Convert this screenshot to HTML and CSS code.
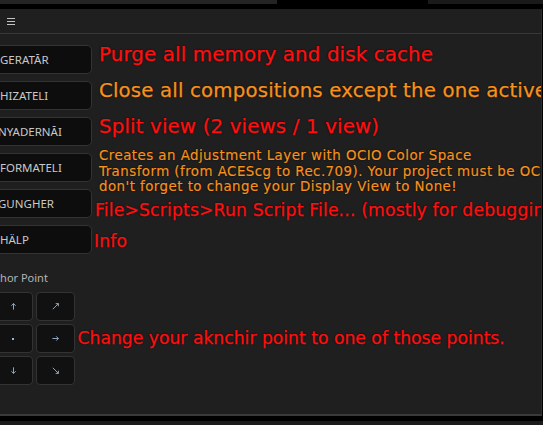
FILE: index.html
```html
<!DOCTYPE html>
<html>
<head>
<meta charset="utf-8">
<link rel="stylesheet" href="styles.css">
</head>
<body>
<div class="topbar"><div class="seg seg-a"></div><div class="seg seg-b"></div><div class="seg seg-c"></div></div>
<div class="panel">
  <div class="panel-head"><span class="burger"><i></i><i></i><i></i></span></div>
  <div class="panel-body">
    <div class="rows">
      <div class="btn">GERATĂR</div>
      <div class="desc d-lg red">Purge all memory and disk cache</div>
      <div class="btn">HIZATELI</div>
      <div class="desc d-lg orange">Close all compositions except the one active</div>
      <div class="btn btn-shift">NYADERNĂI</div>
      <div class="desc d-lg red">Split view (2 views / 1 view)</div>
      <div class="btn">FORMATELI</div>
      <div class="desc d-sm orange">Creates an Adjustment Layer with OCIO Color Space<br>Transform (from ACEScg to Rec.709). Your project must be OCIO, and<br>don't forget to change your Display View to None!</div>
      <div class="btn btn-shift">GUNGHER</div>
      <div class="desc d-md red">File&gt;Scripts&gt;Run Script File... (mostly for debugging)</div>
      <div class="btn">HÄLP</div>
      <div class="desc d-info red">Info</div>
    </div>
    <div class="label">Anchor Point</div>
    <div class="anchor-row">
      <div class="anchor-grid">
        <div class="abtn"><svg viewBox="0 0 10 10"><path d="M8 8L2 2M2 5V2H5"/></svg></div>
        <div class="abtn"><svg viewBox="0 0 10 10"><path d="M5 8.5V1.8M2.6 4.2L5 1.8L7.4 4.2"/></svg></div>
        <div class="abtn"><svg viewBox="0 0 10 10"><path d="M2 8L8.2 1.8M5.2 1.8H8.2V4.8"/></svg></div>
        <div class="abtn"><svg viewBox="0 0 10 10"><path d="M8.5 5H1.8M4.2 2.6L1.8 5L4.2 7.4"/></svg></div>
        <div class="abtn"><span class="dot"></span></div>
        <div class="abtn"><svg viewBox="0 0 10 10"><path d="M1.5 5H8.2M5.8 2.6L8.2 5L5.8 7.4"/></svg></div>
        <div class="abtn"><svg viewBox="0 0 10 10"><path d="M8 2L1.8 8.2M1.8 5.2V8.2H4.8"/></svg></div>
        <div class="abtn"><svg viewBox="0 0 10 10"><path d="M5 1.5V8.2M2.6 5.8L5 8.2L7.4 5.8"/></svg></div>
        <div class="abtn"><svg viewBox="0 0 10 10"><path d="M2 2L8.2 8.2M8.2 5.2V8.2H5.2"/></svg></div>
      </div>
      <div class="desc d-anchor red">Change your aknchir point to one of those points.</div>
    </div>
  </div>
</div>
<div class="bottom"></div>
</body>
</html>
```
FILE: styles.css
```css
html, body {
  margin: 0;
  padding: 0;
}
body {
  background: #000;
  width: 543px;
  height: 425px;
  overflow: hidden;
  font-family: "Noto Sans", "DejaVu Sans", sans-serif;
}
.topbar {
  display: flex;
  height: 4px;
  margin-bottom: 5px;
}
.seg-a { width: 277px; background: #242424; }
.seg-b { width: 151px; background: #000; }
.seg-c { flex: 1; background: #1a1a1a; }

.panel {
  box-sizing: border-box;
  height: 407px;
  width: 542px;
  background: #1f1f1f;
  border-bottom: 2px solid #3a3a3a;
  border-right: 1px solid #2c2c2c;
  overflow: hidden;
}
.panel-head {
  box-sizing: border-box;
  height: 25px;
  padding: 9px 0 0 7px;
  border-bottom: 1px solid #383838;
}
.burger {
  display: flex;
  flex-direction: column;
  gap: 2px;
}
.burger i {
  display: block;
  width: 8px;
  height: 1px;
  background: #c4c4c4;
}
.panel-body {
  margin-left: -48px;
  padding-top: 11px;
}
.rows {
  display: grid;
  grid-template-columns: 140px auto;
  grid-auto-rows: 29px;
  row-gap: 7px;
  column-gap: 7px;
}
.btn {
  box-sizing: border-box;
  height: 29px;
  border: 1px solid #333;
  border-radius: 5px;
  background: #0d0d0d;
  color: #c8c8c8;
  font-size: 11.5px;
  display: flex;
  align-items: center;
  padding-left: 47px;
  white-space: nowrap;
  overflow: hidden;
}
.btn-shift { padding-left: 45px; }
.desc {
  white-space: nowrap;
  align-self: start;
  font-family: "DejaVu Sans", sans-serif;
  text-shadow: 0 0 2px rgba(0,0,0,0.8);
  -webkit-text-stroke: 0.25px currentColor;
}
.red { color: #ff0f0f; }
.orange { color: #f7921c; }
.d-lg {
  font-size: 19.8px;
  line-height: 20px;
  letter-spacing: 0.15px;
}
.d-sm {
  font-size: 13.4px;
  line-height: 15.5px;
  letter-spacing: 0.45px;
  margin-top: -4.7px;
  -webkit-text-stroke: 0.15px currentColor;
}
.d-md {
  font-size: 17.2px;
  line-height: 20px;
  letter-spacing: 0.17px;
  margin-top: 11px;
  margin-left: -4px;
}
.d-info {
  font-size: 17.2px;
  line-height: 20px;
  letter-spacing: 0.17px;
  margin-top: 6px;
  margin-left: -5px;
}
.label {
  margin-top: 17px;
  padding-left: 29px;
  font-size: 11px;
  line-height: 14px;
  color: #b4b4b4;
  white-space: nowrap;
}
.anchor-row {
  margin-top: 7px;
  display: flex;
  align-items: center;
  gap: 3px;
}
.anchor-grid {
  display: grid;
  grid-template-columns: repeat(3, 38.5px);
  grid-auto-rows: 29px;
  column-gap: 3.5px;
  row-gap: 3px;
  flex: none;
}
.abtn {
  box-sizing: border-box;
  border: 1px solid #333;
  border-radius: 4px;
  background: #111;
  display: flex;
  align-items: center;
  justify-content: center;
}
.abtn svg {
  width: 9px;
  height: 9px;
  fill: none;
  stroke: #9db6cf;
  stroke-width: 1;
}
.dot {
  width: 2px;
  height: 2px;
  background: #9db6cf;
}
.d-anchor {
  font-size: 17.2px;
  line-height: 20px;
  align-self: center;
  margin-top: -2px;
}
.bottom {
  margin-top: 5px;
  height: 4px;
  background: #1b1b1b;
}
```
